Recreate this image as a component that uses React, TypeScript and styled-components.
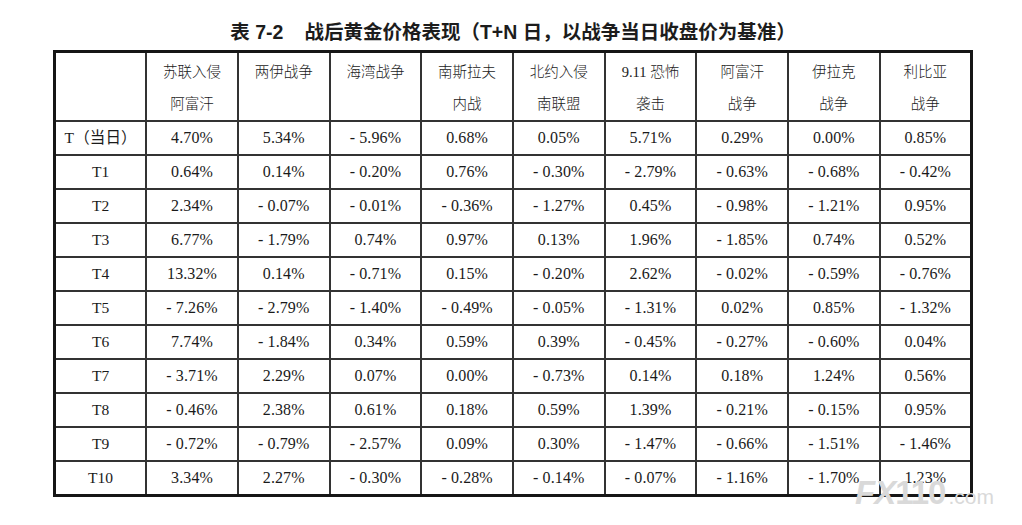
import React from 'react';
import styled, { createGlobalStyle } from 'styled-components';

const GlobalStyle = createGlobalStyle`
  html, body {
    margin: 0;
    padding: 0;
    background: #ffffff;
  }
`;

const Page = styled.div`
  position: relative;
  width: 1022px;
  height: 525px;
  overflow: hidden;
  background: #ffffff;
  color: #1a1a1a;
`;

const Title = styled.h1`
  margin: 0;
  padding: 18px 0 0 53px;
  width: 920px;
  text-align: center;
  font-family: "Liberation Sans", "Noto Sans CJK SC", sans-serif;
  font-size: 19.5px;
  font-weight: 700;
  line-height: 28px;
  color: #1c1c1c;
`;

const TitleGap = styled.span`
  display: inline-block;
  width: 21px;
`;

const Table = styled.table`
  margin: 4px 0 0 53px;
  width: 920px;
  border-collapse: collapse;
  table-layout: fixed;
  border: 3px solid #161616;
  font-family: "Liberation Serif", "Noto Sans CJK SC", serif;
  color: #1a1a1a;
`;

const HeadCell = styled.th`
  height: 63px;
  padding: 3px 0 0;
  vertical-align: top;
  text-align: center;
  font-weight: 300;
  font-size: 14.5px;
  line-height: 32px;
  border: 2px solid #333333;
  border-bottom-width: 2px;
`;

const Cell = styled.td<{ $label?: boolean }>`
  height: 32px;
  padding: 0;
  vertical-align: middle;
  text-align: center;
  font-size: ${p => (p.$label ? '15.5px' : '16px')};
  line-height: 20px;
  border: 2px solid #333333;
  border-top-width: 2px;
  border-bottom-width: 2px;
  letter-spacing: 0.1px;
`;

const Watermark = styled.div`
  position: absolute;
  left: 855px;
  top: 474px;
  display: flex;
  align-items: baseline;
  color: #d9d9d9;
  font-family: "Liberation Sans", Arial, sans-serif;
  pointer-events: none;
`;

const MarkBig = styled.span`
  font-size: 33px;
  font-weight: 700;
  letter-spacing: -1px;
  font-style: italic;
`;

const MarkNum = styled.span`
  font-size: 33px;
  font-weight: 700;
  letter-spacing: -1px;
`;

const MarkSmall = styled.span`
  margin-left: 3px;
  font-size: 21px;
  font-weight: 400;
`;

const headers = [
  ['苏联入侵', '阿富汗'],
  ['两伊战争'],
  ['海湾战争'],
  ['南斯拉夫', '内战'],
  ['北约入侵', '南联盟'],
  ['9.11 恐怖', '袭击'],
  ['阿富汗', '战争'],
  ['伊拉克', '战争'],
  ['利比亚', '战争'],
];

const rows: [string, number[]][] = [
  ['T（当日）', [4.7, 5.34, -5.96, 0.68, 0.05, 5.71, 0.29, 0.0, 0.85]],
  ['T1', [0.64, 0.14, -0.2, 0.76, -0.3, -2.79, -0.63, -0.68, -0.42]],
  ['T2', [2.34, -0.07, -0.01, -0.36, -1.27, 0.45, -0.98, -1.21, 0.95]],
  ['T3', [6.77, -1.79, 0.74, 0.97, 0.13, 1.96, -1.85, 0.74, 0.52]],
  ['T4', [13.32, 0.14, -0.71, 0.15, -0.2, 2.62, -0.02, -0.59, -0.76]],
  ['T5', [-7.26, -2.79, -1.4, -0.49, -0.05, -1.31, 0.02, 0.85, -1.32]],
  ['T6', [7.74, -1.84, 0.34, 0.59, 0.39, -0.45, -0.27, -0.6, 0.04]],
  ['T7', [-3.71, 2.29, 0.07, 0.0, -0.73, 0.14, 0.18, 1.24, 0.56]],
  ['T8', [-0.46, 2.38, 0.61, 0.18, 0.59, 1.39, -0.21, -0.15, 0.95]],
  ['T9', [-0.72, -0.79, -2.57, 0.09, 0.3, -1.47, -0.66, -1.51, -1.46]],
  ['T10', [3.34, 2.27, -0.3, -0.28, -0.14, -0.07, -1.16, -1.7, 1.23]],
];

const fmt = (v: number) =>
  v < 0 ? `- ${Math.abs(v).toFixed(2)}%` : `${v.toFixed(2)}%`;

export default function App() {
  return (
    <Page>
      <GlobalStyle />
      <Title>
        表 7-2<TitleGap />战后黄金价格表现（T+N 日，以战争当日收盘价为基准）
      </Title>
      <Table>
        <thead>
          <tr>
            <HeadCell />
            {headers.map((h, i) => (
              <HeadCell key={i}>
                {h.map((line, j) => (
                  <div key={j}>{line}</div>
                ))}
              </HeadCell>
            ))}
          </tr>
        </thead>
        <tbody>
          {rows.map(([label, vals]) => (
            <tr key={label}>
              <Cell $label>{label}</Cell>
              {vals.map((v, i) => (
                <Cell key={i}>{fmt(v)}</Cell>
              ))}
            </tr>
          ))}
        </tbody>
      </Table>
      <Watermark>
        <MarkBig>FX</MarkBig>
        <MarkNum>110</MarkNum>
        <MarkSmall>.com</MarkSmall>
      </Watermark>
    </Page>
  );
}
